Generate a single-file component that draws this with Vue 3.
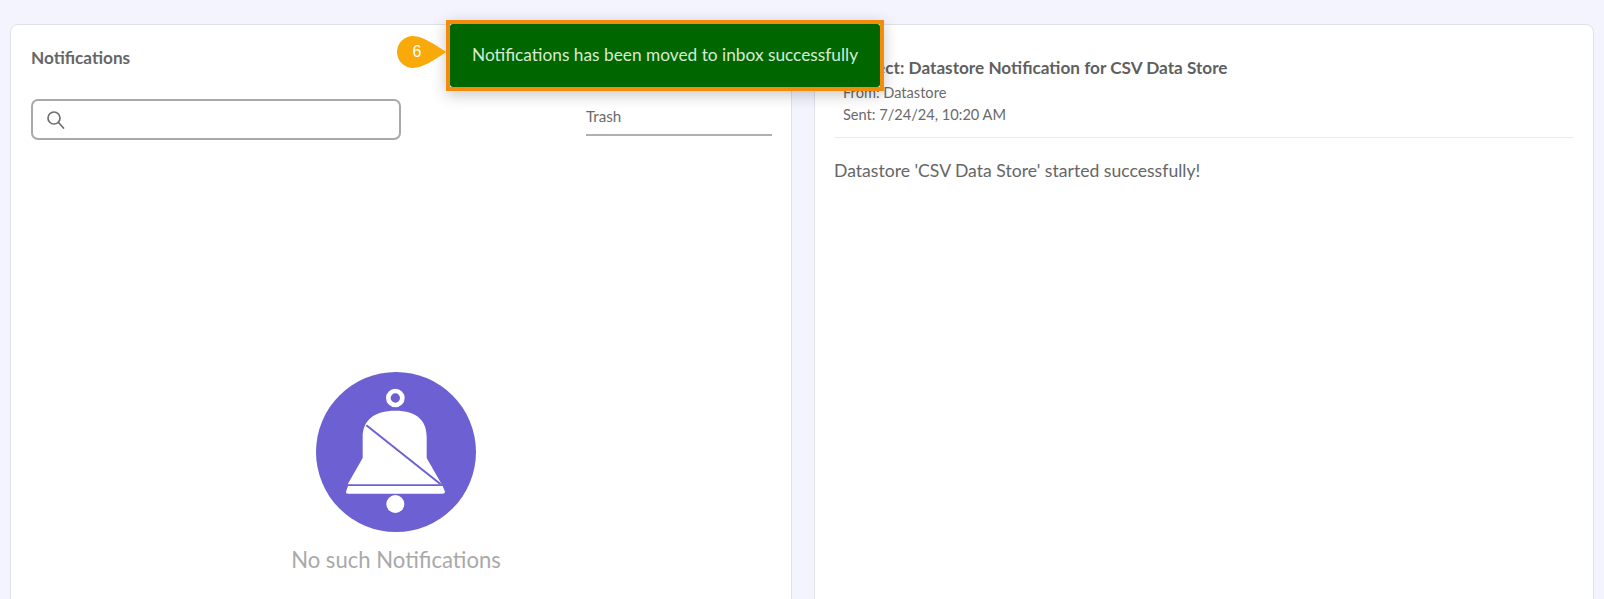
<script setup>
const title = 'Notifications'
</script>

<template>
  <div class="page">
    <section class="card left">
      <h2 class="title">{{ title }}</h2>
      <div class="filters">
        <label class="search">
          <svg class="search-icon" width="20" height="20" viewBox="0 0 20 20" fill="none" stroke="#6f6f6f" stroke-width="1.7">
            <circle cx="8" cy="8" r="6" />
            <path d="M12.500 12.500l5 5.500" stroke-linecap="round" />
          </svg>
        </label>
        <div class="select">Trash</div>
      </div>
      <div class="empty">
        <svg class="bell" width="160" height="160" viewBox="138 37 480 480">
          <circle cx="378" cy="277" r="240" fill="#6c60d3" />
          <circle cx="376" cy="115" r="21" fill="none" stroke="#fff" stroke-width="14" />
          <path d="M376 153C312 153 278 182 278 232V295L233 374H515L470 295V232C470 182 440 153 376 153Z" fill="#fff" />
          <path d="M234 379H518L525 396Q525 402 518 402H234Q227 402 228 396Z" fill="#fff" />
          <path d="M289 197L512 374" stroke="#6c60d3" stroke-width="6" />
          <circle cx="376" cy="433" r="27" fill="#fff" />
        </svg>
        <p class="empty-text">No such Notifications</p>
      </div>
    </section>

    <section class="card right">
      <div class="head">
        <h3 class="subject">Subject: Datastore Notification for CSV Data Store</h3>
        <p class="meta">From: Datastore</p>
        <p class="meta">Sent: 7/24/24, 10:20 AM</p>
      </div>
      <p class="body-text">Datastore 'CSV Data Store' started successfully!</p>
    </section>

    <div class="toast-frame">
      <div class="toast">Notifications has been moved to inbox successfully</div>
    </div>

    <div class="pin">
      <svg width="50" height="32" viewBox="0 0 50 32">
        <path d="M16 0C26 0 38 9 49.500 16C38 23 26 32 16 32A16 16 0 0 1 16 0Z" fill="#f9a90a" />
      </svg>
      <span class="pin-num">6</span>
    </div>
  </div>
</template>

<style scoped>
.page {
  position: relative;
  box-sizing: border-box;
  width: 1604px;
  height: 599px;
  overflow: hidden;
  display: flex;
  gap: 22px;
  padding: 24px 10px 0 10px;
  background: #f3f4fd;
  font-family: Lato, "Liberation Sans", sans-serif;
  color: #5f5f5f;
}
.card {
  box-sizing: border-box;
  height: 620px;
  background: #fff;
  border: 1px solid #dfe1ea;
  border-radius: 8px;
}
.left {
  width: 782px;
  padding: 22px 19px 0 20px;
}
.right {
  width: 780px;
  padding: 32px 19px 0 19px;
}
.title {
  margin: 0;
  font-size: 17.200px;
  line-height: 21px;
  font-weight: 700;
  color: #666;
}
.filters {
  display: flex;
  justify-content: space-between;
  margin-top: 31px;
}
.search {
  box-sizing: border-box;
  display: flex;
  align-items: center;
  width: 370px;
  height: 41px;
  padding-left: 13px;
  border: 2px solid #a9a9a9;
  border-radius: 7px;
}
.select {
  box-sizing: border-box;
  width: 186px;
  height: 37px;
  padding-top: 8px;
  font-size: 15.200px;
  line-height: 18px;
  color: #6a6a6a;
  border-bottom: 2px solid #b0b0b0;
}
.empty {
  display: flex;
  flex-direction: column;
  align-items: center;
  width: 730px;
  margin-top: 232px;
}
.bell {
  display: block;
}
.empty-text {
  margin: 14px 0 0;
  font-size: 22.100px;
  line-height: 28px;
  color: #a9a9a9;
}
.head {
  padding: 0 0 11px 9px;
  border-bottom: 1px solid #ececec;
}
.subject {
  margin: 0 0 3px;
  font-size: 17.200px;
  line-height: 22px;
  font-weight: 700;
  color: #5f5f5f;
}
.meta {
  margin: 0;
  font-size: 14.600px;
  line-height: 22px;
  color: #6a6a6a;
}
.body-text {
  margin: 21px 0 0;
  font-size: 17.600px;
  line-height: 23px;
  color: #666;
}
.toast-frame {
  position: absolute;
  left: 446px;
  top: 20px;
  box-sizing: border-box;
  width: 438px;
  height: 71px;
  border: 4px solid #f58b0b;
  box-shadow: 0 4px 14px rgba(0, 0, 0, 0.22);
}
.toast {
  box-sizing: border-box;
  height: 100%;
  display: flex;
  align-items: center;
  padding: 0 0 2px 22px;
  background: #006600;
  border-radius: 3px;
  color: #d6ecd2;
  font-size: 17.300px;
  white-space: nowrap;
}
.pin {
  position: absolute;
  left: 397px;
  top: 36px;
  width: 50px;
  height: 32px;
}
.pin svg {
  display: block;
}
.pin-num {
  position: absolute;
  left: 13px;
  top: 6px;
  width: 14px;
  text-align: center;
  font-family: "Liberation Sans", sans-serif;
  font-size: 16px;
  line-height: 20px;
  color: #fff;
}
</style>
